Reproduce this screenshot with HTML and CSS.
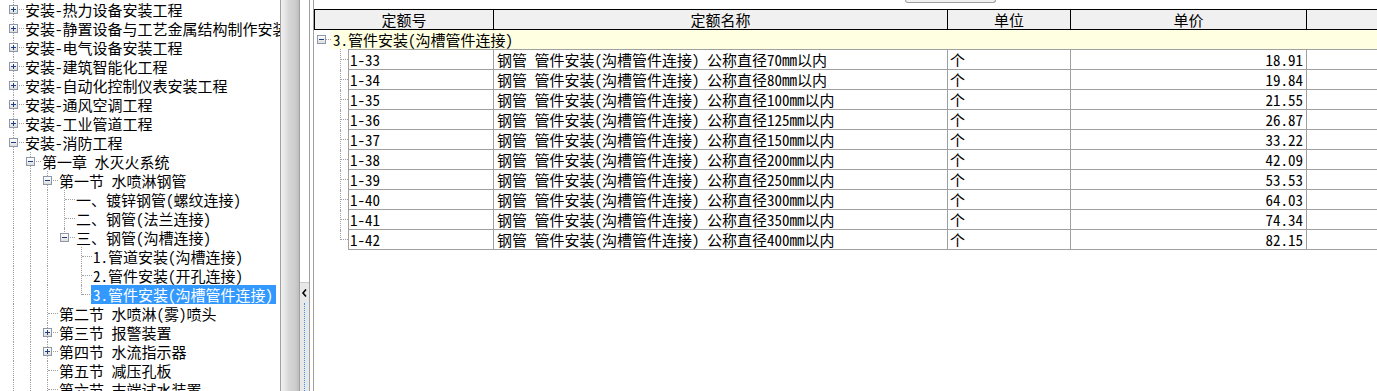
FILE: index.html
```html
<!DOCTYPE html>
<html lang="zh-CN">
<head>
<meta charset="UTF-8">
<title>定额库</title>
<link rel="stylesheet" href="styles.css">
</head>
<body>
<div class="app">
    <!-- Chapter tree -->
    <div class="tree-pane">
        <div class="tree">
            <div class="tree-row"><span class="c t"><i class="box plus"></i></span><span class="label">安装-热力设备安装工程</span></div>
            <div class="tree-row"><span class="c t"><i class="box plus"></i></span><span class="label">安装-静置设备与工艺金属结构制作安装工程</span></div>
            <div class="tree-row"><span class="c t"><i class="box plus"></i></span><span class="label">安装-电气设备安装工程</span></div>
            <div class="tree-row"><span class="c t"><i class="box plus"></i></span><span class="label">安装-建筑智能化工程</span></div>
            <div class="tree-row"><span class="c t"><i class="box plus"></i></span><span class="label">安装-自动化控制仪表安装工程</span></div>
            <div class="tree-row"><span class="c t"><i class="box plus"></i></span><span class="label">安装-通风空调工程</span></div>
            <div class="tree-row"><span class="c t"><i class="box plus"></i></span><span class="label">安装-工业管道工程</span></div>
            <div class="tree-row"><span class="c t"><i class="box minus"></i></span><span class="label">安装-消防工程</span></div>
            <div class="tree-row"><span class="g v"></span><span class="c t"><i class="box minus"></i></span><span class="label">第一章 水灭火系统</span></div>
            <div class="tree-row"><span class="g v"></span><span class="g v"></span><span class="c t"><i class="box minus"></i></span><span class="label">第一节 水喷淋钢管</span></div>
            <div class="tree-row"><span class="g v"></span><span class="g v"></span><span class="g v"></span><span class="c t"></span><span class="label">一、镀锌钢管(螺纹连接)</span></div>
            <div class="tree-row"><span class="g v"></span><span class="g v"></span><span class="g v"></span><span class="c t"></span><span class="label">二、钢管(法兰连接)</span></div>
            <div class="tree-row"><span class="g v"></span><span class="g v"></span><span class="g v"></span><span class="c l"><i class="box minus"></i></span><span class="label">三、钢管(沟槽连接)</span></div>
            <div class="tree-row"><span class="g v"></span><span class="g v"></span><span class="g v"></span><span class="g"></span><span class="c t"></span><span class="label">1.管道安装(沟槽连接)</span></div>
            <div class="tree-row"><span class="g v"></span><span class="g v"></span><span class="g v"></span><span class="g"></span><span class="c t"></span><span class="label">2.管件安装(开孔连接)</span></div>
            <div class="tree-row"><span class="g v"></span><span class="g v"></span><span class="g v"></span><span class="g"></span><span class="c l"></span><span class="label selected">3.管件安装(沟槽管件连接)</span></div>
            <div class="tree-row"><span class="g v"></span><span class="g v"></span><span class="c t"></span><span class="label">第二节 水喷淋(雾)喷头</span></div>
            <div class="tree-row"><span class="g v"></span><span class="g v"></span><span class="c t"><i class="box plus"></i></span><span class="label">第三节 报警装置</span></div>
            <div class="tree-row"><span class="g v"></span><span class="g v"></span><span class="c t"><i class="box plus"></i></span><span class="label">第四节 水流指示器</span></div>
            <div class="tree-row"><span class="g v"></span><span class="g v"></span><span class="c t"></span><span class="label">第五节 减压孔板</span></div>
            <div class="tree-row"><span class="g v"></span><span class="g v"></span><span class="c t"></span><span class="label">第六节 末端试水装置</span></div>
        </div>
    </div>

    <!-- Splitter -->
    <div class="splitter"></div>
    <div class="strip">
        <div class="strip-top"></div>
        <div class="collapse">
            <svg width="8" height="8" viewBox="0 0 8 8"><polyline points="5,0.5 2,4 5,7.5" fill="none" stroke="#000" stroke-width="1.6"/></svg>
            <div class="collapse-line"></div>
        </div>
    </div>
    <div class="gap"></div>

    <!-- Quota grid -->
    <div class="grid-pane">
        <div class="topbar"><div class="stub"></div></div>
        <div class="head">
            <div class="hc">定额号</div>
            <div class="hc">定额名称</div>
            <div class="hc">单位</div>
            <div class="hc">单价</div>
            <div class="hc last"></div>
        </div>
        <div class="group">
            <span class="gbox"><i class="box minus"></i></span>
            <span class="gtext">3.管件安装(沟槽管件连接)</span>
        </div>
        <div class="rows">
            <div class="row"><span class="rt"></span><div class="cell code">1-33</div><div class="cell name">钢管 管件安装(沟槽管件连接) 公称直径70mm以内</div><div class="cell unit">个</div><div class="cell price">18.91</div><div class="cell last"></div></div>
            <div class="row"><span class="rt"></span><div class="cell code">1-34</div><div class="cell name">钢管 管件安装(沟槽管件连接) 公称直径80mm以内</div><div class="cell unit">个</div><div class="cell price">19.84</div><div class="cell last"></div></div>
            <div class="row"><span class="rt"></span><div class="cell code">1-35</div><div class="cell name">钢管 管件安装(沟槽管件连接) 公称直径100mm以内</div><div class="cell unit">个</div><div class="cell price">21.55</div><div class="cell last"></div></div>
            <div class="row"><span class="rt"></span><div class="cell code">1-36</div><div class="cell name">钢管 管件安装(沟槽管件连接) 公称直径125mm以内</div><div class="cell unit">个</div><div class="cell price">26.87</div><div class="cell last"></div></div>
            <div class="row"><span class="rt"></span><div class="cell code">1-37</div><div class="cell name">钢管 管件安装(沟槽管件连接) 公称直径150mm以内</div><div class="cell unit">个</div><div class="cell price">33.22</div><div class="cell last"></div></div>
            <div class="row"><span class="rt"></span><div class="cell code">1-38</div><div class="cell name">钢管 管件安装(沟槽管件连接) 公称直径200mm以内</div><div class="cell unit">个</div><div class="cell price">42.09</div><div class="cell last"></div></div>
            <div class="row"><span class="rt"></span><div class="cell code">1-39</div><div class="cell name">钢管 管件安装(沟槽管件连接) 公称直径250mm以内</div><div class="cell unit">个</div><div class="cell price">53.53</div><div class="cell last"></div></div>
            <div class="row"><span class="rt"></span><div class="cell code">1-40</div><div class="cell name">钢管 管件安装(沟槽管件连接) 公称直径300mm以内</div><div class="cell unit">个</div><div class="cell price">64.03</div><div class="cell last"></div></div>
            <div class="row"><span class="rt"></span><div class="cell code">1-41</div><div class="cell name">钢管 管件安装(沟槽管件连接) 公称直径350mm以内</div><div class="cell unit">个</div><div class="cell price">74.34</div><div class="cell last"></div></div>
            <div class="row end"><span class="rt"></span><div class="cell code">1-42</div><div class="cell name">钢管 管件安装(沟槽管件连接) 公称直径400mm以内</div><div class="cell unit">个</div><div class="cell price">82.15</div><div class="cell last"></div></div>
        </div>
    </div>
</div>
</body>
</html>
```

FILE: styles.css
```css
/* General */
* {
    margin: 0;
    padding: 0;
    box-sizing: border-box;
}

body {
    width: 1377px;
    height: 391px;
    overflow: hidden;
    background: #fff;
    color: #000;
    font-family: "Noto Sans Mono CJK SC", "Noto Sans CJK SC", "DejaVu Sans Mono", monospace;
    font-size: 15px;
}

.app {
    display: flex;
    height: 391px;
}

/* Tree */
.tree-pane {
    width: 280px;
    flex: none;
    overflow: hidden;
}

.tree {
    padding-left: 4px;
}

.tree-row {
    display: flex;
    align-items: center;
    height: 19px;
    white-space: nowrap;
}

.g,
.c {
    position: relative;
    flex: none;
    width: 17px;
    height: 19px;
}

.g.v::before,
.c::before {
    content: "";
    position: absolute;
    left: 9px;
    top: 0;
    bottom: 0;
    border-left: 1px dotted #a0a0a0;
}

.c.l::before {
    bottom: 9px;
}

.c::after {
    content: "";
    position: absolute;
    left: 10px;
    right: -3px;
    top: 9px;
    border-top: 1px dotted #a0a0a0;
}

.box {
    position: absolute;
    left: 5px;
    top: 5px;
    width: 9px;
    height: 9px;
    border: 1px solid #8e99a5;
    background: linear-gradient(#ffffff, #dedede);
    z-index: 1;
}

.box::before {
    content: "";
    position: absolute;
    left: 1px;
    top: 3px;
    width: 5px;
    height: 1px;
    background: #1f3f80;
}

.box.plus::after {
    content: "";
    position: absolute;
    left: 3px;
    top: 1px;
    width: 1px;
    height: 5px;
    background: #1f3f80;
}

.label {
    margin-left: 2px;
    padding: 0 2px;
    line-height: 19px;
}

.label.selected {
    background: #3399ff;
    color: #fff;
    padding-right: 3px;
}

/* Splitter */
.splitter {
    width: 20px;
    flex: none;
    border-left: 1px solid #a0a0a0;
    border-right: 1px solid #a0a0a0;
    background: linear-gradient(to right, #f2f2f2 0%, #e4e4e4 25%, #d6d6d6 45%, #cdcdcd 80%, #bdbdbd 100%);
}

.strip {
    width: 10px;
    flex: none;
    display: flex;
    flex-direction: column;
    border-right: 1px solid #a0a0a0;
}

.strip-top {
    height: 282px;
    flex: none;
}

.collapse {
    flex: 1;
    display: flex;
    flex-direction: column;
    align-items: center;
    padding-top: 6px;
    border-top: 1px solid #c8c8c8;
    background: #e8e8e8;
}

.collapse svg {
    display: block;
    margin-left: 1px;
}

.collapse-line {
    flex: 1;
    margin-top: 6px;
    border-left: 1px dotted #3b8fe8;
}

.gap {
    width: 3px;
    flex: none;
}

/* Grid */
.grid-pane {
    flex: 1;
    border-left: 1px solid #a0a0a0;
    white-space: nowrap;
}

.topbar {
    height: 9px;
    padding-left: 591px;
}

.stub {
    width: 91px;
    height: 3px;
    border: 1px solid #a0a0a0;
    border-top: none;
    border-radius: 0 0 3px 3px;
    background: #f0f0f0;
}

.head {
    display: grid;
    grid-template-columns: 179px 454px 123px 236px 1fr;
    height: 21px;
    border-top: 1px solid #000;
    border-bottom: 1px solid #000;
    border-left: 1px solid #000;
    background: #f0f0f0;
}

.hc {
    border-right: 1px solid #000;
    text-align: center;
    line-height: 19px;
}

.hc.last {
    border-right: none;
}

.group {
    display: flex;
    height: 19px;
}

.gbox {
    position: relative;
    width: 17px;
    flex: none;
}

.gbox .box {
    left: 3px;
}

.gbox::after {
    content: "";
    position: absolute;
    left: 12px;
    right: 0;
    top: 9px;
    border-top: 1px dotted #a0a0a0;
}

.gtext {
    flex: 1;
    padding-left: 2px;
    line-height: 19px;
    background: #ffffe1;
}

.row {
    display: grid;
    grid-template-columns: 34px 146px 454px 123px 236px 1fr;
    height: 20px;
}

.row:first-child {
    height: 21px;
}

.rt {
    position: relative;
}

.rt::before {
    content: "";
    position: absolute;
    left: 26px;
    top: 0;
    bottom: 0;
    border-left: 1px dotted #a0a0a0;
}

.row.end .rt::before {
    bottom: 10px;
}

.rt::after {
    content: "";
    position: absolute;
    left: 27px;
    right: 0;
    bottom: 10px;
    border-top: 1px dotted #a0a0a0;
}

.cell {
    border-right: 1px solid #a0a0a0;
    border-bottom: 1px solid #a0a0a0;
    line-height: 19px;
    overflow: hidden;
}

.row:first-child .cell {
    border-top: 1px solid #a0a0a0;
}

.cell.code {
    border-left: 1px solid #a0a0a0;
    padding-left: 1px;
}

.cell.name {
    padding-left: 3px;
}

.cell.unit {
    padding-left: 2px;
}

.cell.price {
    text-align: right;
    padding-right: 3px;
}

.cell.last {
    border-right: none;
}
```
